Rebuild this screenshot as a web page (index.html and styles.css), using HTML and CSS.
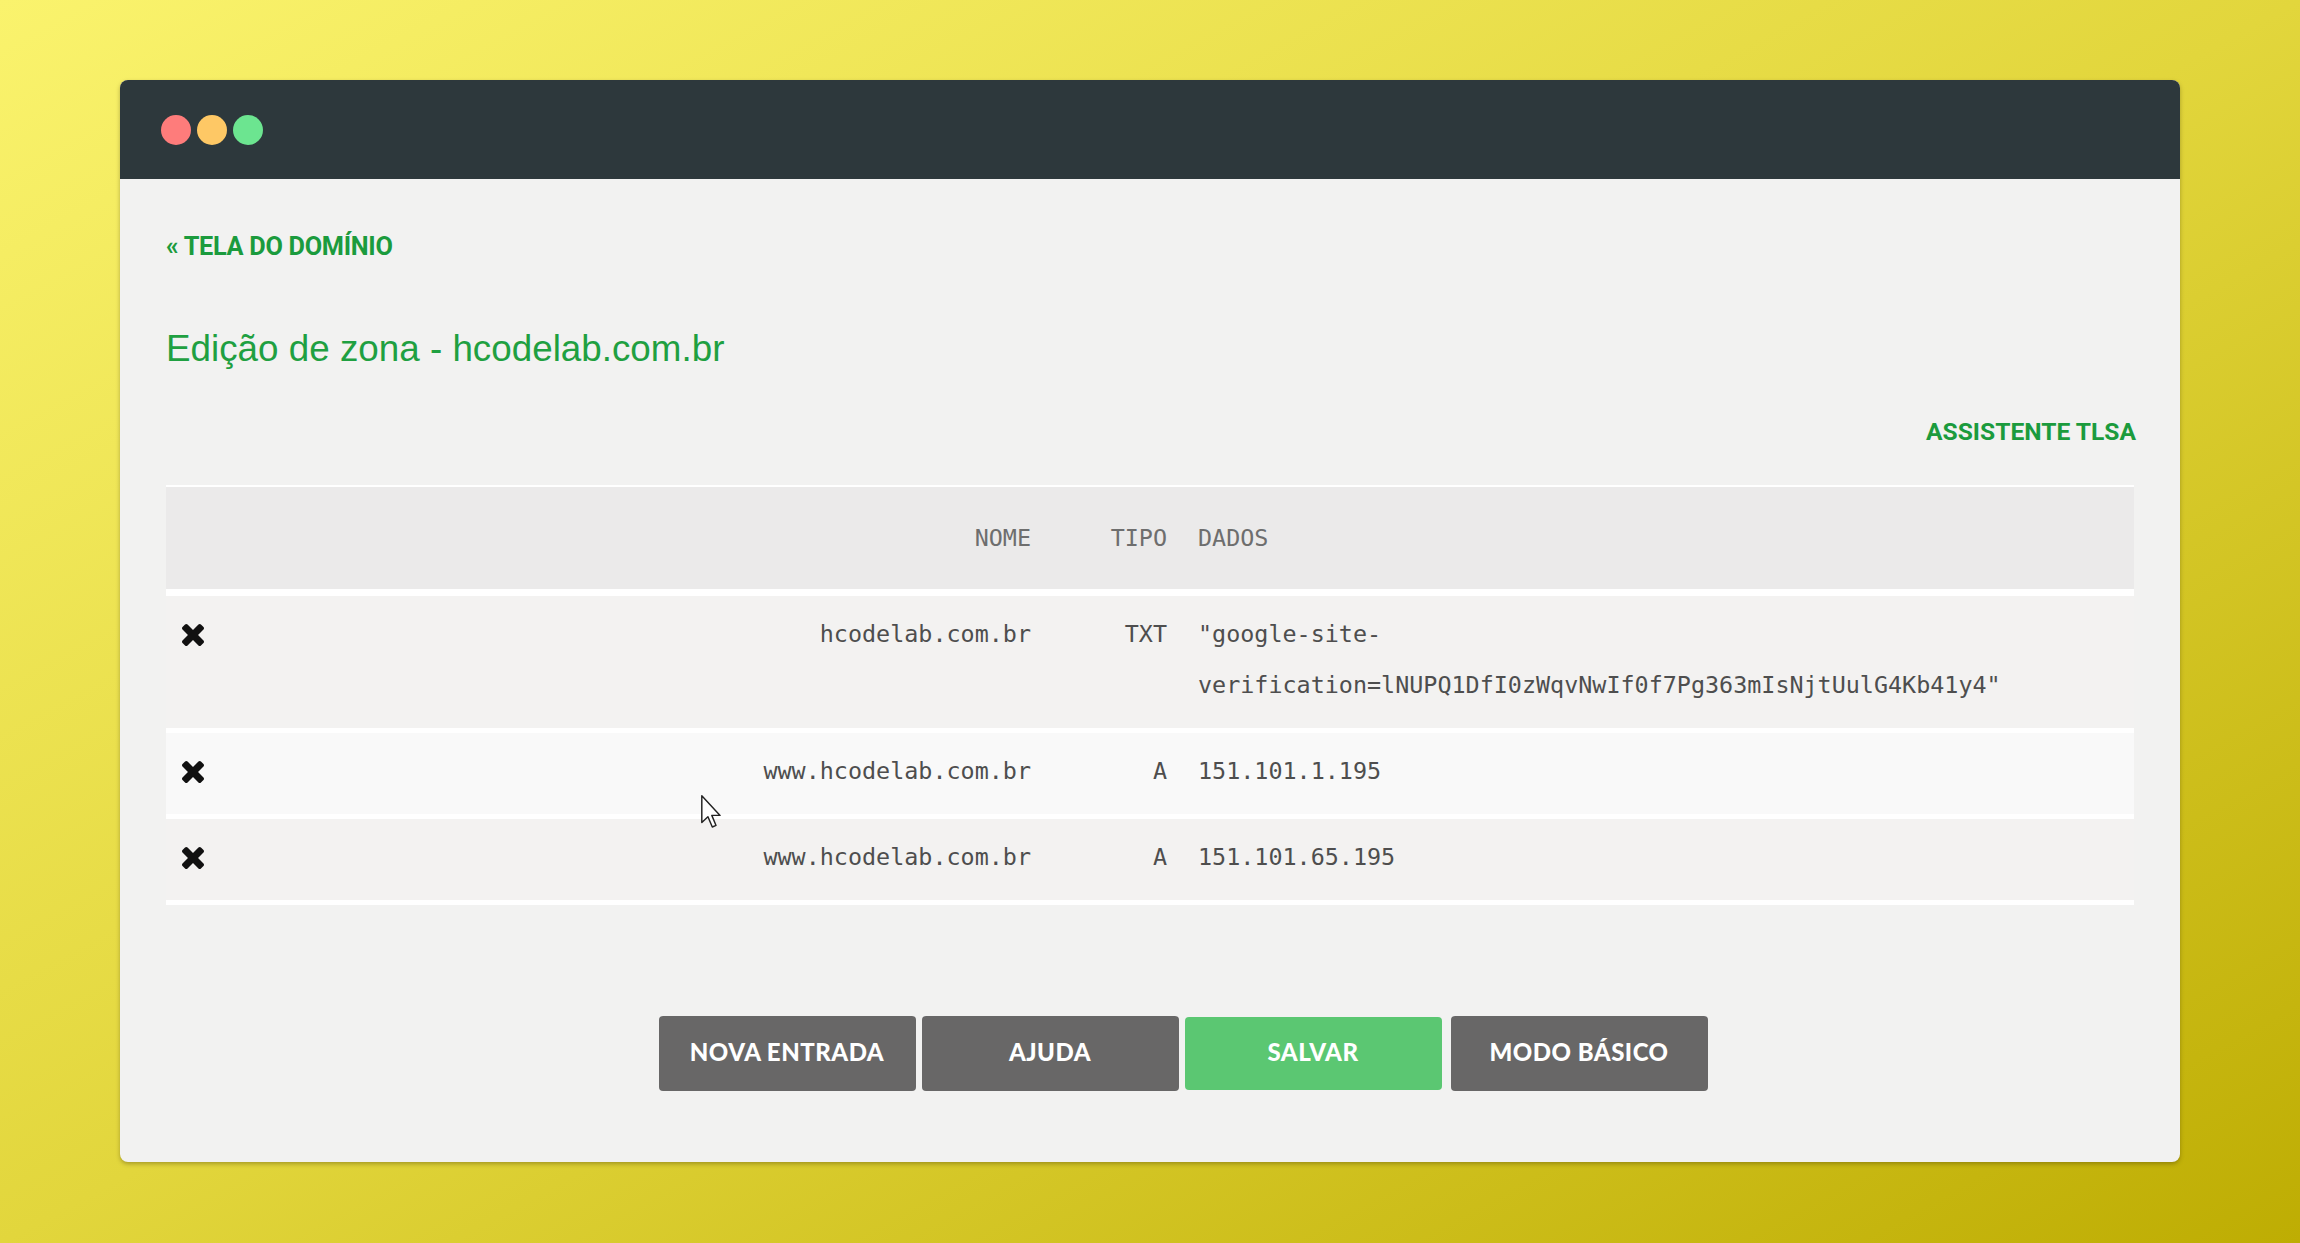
FILE: index.html
```html
<!DOCTYPE html>
<html lang="pt-BR">
<head>
<meta charset="utf-8">
<title>Edição de zona - hcodelab.com.br</title>
<link rel="stylesheet" href="styles.css">
</head>
<body>
<div class="window">
  <div class="titlebar">
    <span class="dot dot-red"></span>
    <span class="dot dot-yellow"></span>
    <span class="dot dot-green"></span>
  </div>
  <div class="content">
    <a class="back" href="#">« TELA DO DOMÍNIO</a>
    <h1 class="title">Edição de zona - hcodelab.com.br</h1>
    <div class="tools"><a class="tlsa" href="#">ASSISTENTE TLSA</a></div>
    <table class="zone">
      <colgroup>
        <col class="c-del">
        <col class="c-name">
        <col class="c-type">
        <col class="c-data">
      </colgroup>
      <thead>
        <tr>
          <th></th>
          <th class="r">NOME</th>
          <th class="r">TIPO</th>
          <th class="l">DADOS</th>
        </tr>
      </thead>
      <tbody>
        <tr class="odd">
          <td><span class="del"><svg viewBox="110 366 1188 1188" width="22" height="22"><path d="M1298 1322q0 40-28 68l-136 136q-28 28-68 28t-68-28l-294-294-294 294q-28 28-68 28t-68-28l-136-136q-28-28-28-68t28-68l294-294-294-294q-28-28-28-68t28-68l136-136q28-28 68-28t68 28l294 294 294-294q28-28 68-28t68 28l136 136q28 28 28 68t-28 68l-294 294 294 294q28 28 28 68z"/></svg></span></td>
          <td class="r">hcodelab.com.br</td>
          <td class="r">TXT</td>
          <td class="l">"google-site-verification=lNUPQ1DfI0zWqvNwIf0f7Pg363mIsNjtUulG4Kb41y4"</td>
        </tr>
        <tr class="even">
          <td><span class="del"><svg viewBox="110 366 1188 1188" width="22" height="22"><path d="M1298 1322q0 40-28 68l-136 136q-28 28-68 28t-68-28l-294-294-294 294q-28 28-68 28t-68-28l-136-136q-28-28-28-68t28-68l294-294-294-294q-28-28-28-68t28-68l136-136q28-28 68-28t68 28l294 294 294-294q28-28 68-28t68 28l136 136q28 28 28 68t-28 68l-294 294 294 294q28 28 28 68z"/></svg></span></td>
          <td class="r">www.hcodelab.com.br</td>
          <td class="r">A</td>
          <td class="l">151.101.1.195</td>
        </tr>
        <tr class="odd">
          <td><span class="del"><svg viewBox="110 366 1188 1188" width="22" height="22"><path d="M1298 1322q0 40-28 68l-136 136q-28 28-68 28t-68-28l-294-294-294 294q-28 28-68 28t-68-28l-136-136q-28-28-28-68t28-68l294-294-294-294q-28-28-28-68t28-68l136-136q28-28 68-28t68 28l294 294 294-294q28-28 68-28t68 28l136 136q28 28 28 68t-28 68l-294 294 294 294q28 28 28 68z"/></svg></span></td>
          <td class="r">www.hcodelab.com.br</td>
          <td class="r">A</td>
          <td class="l">151.101.65.195</td>
        </tr>
      </tbody>
    </table>
    <div class="actions">
      <button class="btn">NOVA ENTRADA</button>
      <button class="btn">AJUDA</button>
      <button class="btn btn-green">SALVAR</button>
      <button class="btn btn-last">MODO BÁSICO</button>
    </div>
  </div>
  <svg class="cursor" viewBox="0 0 13 21" width="21" height="34"><path d="M0.5 0.5 L0.5 17 L4.3 13.4 L7 19.8 L9.3 18.8 L6.7 12.6 L11.8 12.6 Z" fill="#fff" stroke="#222" stroke-width="0.9" stroke-linejoin="round"/></svg>
</div>
</body>
</html>
```

FILE: styles.css
```css
* { box-sizing: border-box; }

html, body {
  margin: 0;
  height: 1243px;
}

body {
  padding: 80px 120px 0;
  background: linear-gradient(to bottom right, #faf36d 0%, #e2d63c 50%, #bead03 100%);
  font-family: "Liberation Sans", Arial, sans-serif;
  overflow: hidden;
}

.window {
  position: relative;
  height: 1082px;
  background: #f2f2f1;
  border-radius: 8px;
  box-shadow: 0 2px 4px rgba(60, 50, 0, 0.35);
}

.titlebar {
  height: 99px;
  background: #2d383c;
  border-radius: 8px 8px 0 0;
  display: flex;
  align-items: center;
  gap: 6px;
  padding-left: 41px;
}

.dot {
  width: 30px;
  height: 30px;
  border-radius: 50%;
}
.dot-red { background: #fe7c7b; }
.dot-yellow { background: #fec865; }
.dot-green { background: #6ce590; }

.content {
  padding: 0 46px;
}

.back {
  display: block;
  margin-top: 53px;
  font-family: Roboto, "Liberation Sans", sans-serif;
  font-weight: 700;
  font-size: 25.3px;
  line-height: 30px;
  color: #1b9b3d;
  text-decoration: none;
  letter-spacing: -0.3px;
}

.title {
  margin: 65px 0 0;
  font-family: "Liberation Sans", Arial, sans-serif;
  font-weight: 400;
  font-size: 36.8px;
  line-height: 44px;
  color: #1fa041;
}

.tools {
  margin-top: 46px;
  display: flex;
  justify-content: flex-end;
}

.tlsa {
  font-family: Roboto, "Liberation Sans", sans-serif;
  font-weight: 700;
  font-size: 24.6px;
  line-height: 30px;
  color: #1b9b3d;
  text-decoration: none;
  margin-right: -2px;
}

.zone {
  margin-top: 38px;
  width: 100%;
  table-layout: fixed;
  border-collapse: collapse;
  font-family: "DejaVu Sans Mono", "Liberation Mono", monospace;
  font-size: 23.4px;
}

.c-del { width: 60px; }
.c-name { width: 820px; }
.c-type { width: 136px; }

.zone thead tr {
  background: #ebeaea;
  border-top: 2px solid #ffffff;
  border-bottom: 7px solid #ffffff;
}

.zone th {
  padding: 25px 15px;
  line-height: 52px;
  font-weight: 400;
  color: #6e6e6e;
}

.zone tbody tr {
  border-bottom: 5px solid #ffffff;
}

.zone tbody tr.odd { background: #f3f2f1; }
.zone tbody tr.even { background: #f9f9f9; }

.zone td {
  padding: 13px 15px 17px;
  line-height: 51px;
  vertical-align: top;
  color: #4e4e4e;
}

.zone .r { text-align: right; }
.zone .l { text-align: left; padding-left: 16px; }

.zone td:first-child,
.zone th:first-child {
  padding-left: 16px;
}

.del {
  display: flex;
  align-items: center;
  height: 51px;
}

.del svg {
  display: block;
  fill: #111111;
}

.actions {
  margin-top: 111px;
  display: flex;
  justify-content: center;
  gap: 6px;
  padding-left: 66px;
}

.btn {
  width: 257px;
  height: 75px;
  border: none;
  border-radius: 4px;
  background: #686767;
  color: #ffffff;
  font-family: Lato, "Open Sans", sans-serif;
  font-weight: 900;
  font-size: 24px;
  letter-spacing: 0.5px;
  padding: 0 0 4px;
}

.btn-green {
  background: #5bc772;
  height: 73px;
  align-self: center;
}

.btn-last {
  margin-left: 3px;
}

.cursor {
  position: absolute;
  left: 581px;
  top: 715px;
}
```
